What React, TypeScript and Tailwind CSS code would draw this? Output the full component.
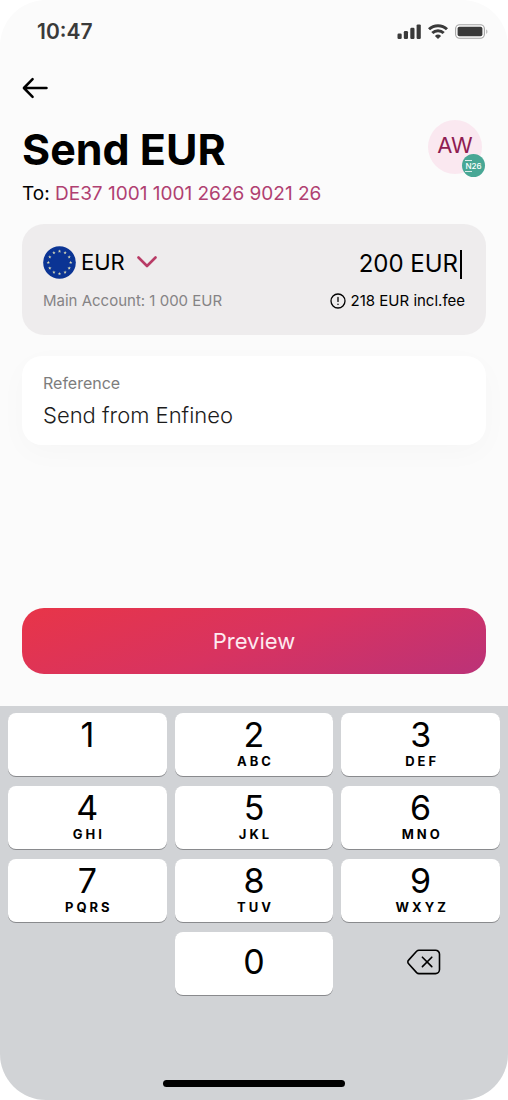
import { useState } from "react";

const keys = [
  { digit: "1", letters: "" },
  { digit: "2", letters: "ABC" },
  { digit: "3", letters: "DEF" },
  { digit: "4", letters: "GHI" },
  { digit: "5", letters: "JKL" },
  { digit: "6", letters: "MNO" },
  { digit: "7", letters: "PQRS" },
  { digit: "8", letters: "TUV" },
  { digit: "9", letters: "WXYZ" },
];

const keyClass =
  "flex h-[63px] flex-col items-center rounded-lg bg-white text-black shadow-[0_1px_0_#898a8d]";

function StatusBar() {
  return (
    <div className="flex h-16 items-center justify-between pl-[37px] pr-5 text-[#3a3a3a]">
      <span className="text-[21px] leading-6 font-semibold">10:47</span>
      <div className="flex items-center gap-[7px]">
        <svg className="h-4 w-6" viewBox="0 0 24 16" fill="currentColor" aria-hidden="true">
          <rect x="0.5" y="9.6" width="4.2" height="5.4" rx="1.2" />
          <rect x="6.8" y="7" width="4.2" height="8" rx="1.2" />
          <rect x="13.3" y="3.8" width="4.2" height="11.2" rx="1.2" />
          <rect x="19.6" y="0.4" width="4.2" height="14.6" rx="1.2" />
        </svg>
        <svg className="h-4 w-5" viewBox="0 0 20 16" aria-hidden="true">
          <g fill="none" stroke="currentColor" strokeWidth="3">
            <path d="M1 5.3a12.9 12.9 0 0 1 18 0" />
            <path d="M4.3 9a8.2 8.2 0 0 1 11.4 0" />
          </g>
          <path d="M10 15 6.9 11.9a4.5 4.5 0 0 1 6.2 0Z" fill="currentColor" />
        </svg>
        <svg className="h-4 w-[33px]" viewBox="0 0 33 16" aria-hidden="true">
          <rect x="0.6" y="0.7" width="28.8" height="13.6" rx="4" fill="none" stroke="#a5a5a5" strokeWidth="1.1" />
          <rect x="2.6" y="2.7" width="24.8" height="9.6" rx="1.8" fill="currentColor" />
          <path d="M31.2 5.4v4.4c1.6-.6 1.6-3.8 0-4.4Z" fill="#b5b5b5" />
        </svg>
      </div>
    </div>
  );
}

function Avatar() {
  return (
    <div className="relative flex size-[54px] items-center justify-center rounded-full bg-[#fae8f0] pb-1 text-[22px] text-[#8f1d52]">
      AW
      <span className="absolute top-[34px] left-[34px] flex size-[23px] items-center justify-center rounded-full bg-[#48a795] text-[8px] leading-[8px] font-medium text-white">
        <span className="border-y border-white/80 py-px">N</span>
        <span>26</span>
      </span>
    </div>
  );
}

function EuFlag() {
  const stars = Array.from({ length: 12 }, (_, i) => {
    const a = (i * Math.PI) / 6;
    return { x: 16.5 + 11.2 * Math.sin(a), y: 16.5 - 11.2 * Math.cos(a) };
  });
  return (
    <svg className="size-[33px] shrink-0" viewBox="0 0 33 33" aria-hidden="true">
      <circle cx="16.5" cy="16.5" r="16.3" fill="#0b3494" />
      {stars.map((s, i) => (
        <path
          key={i}
          transform={`translate(${s.x} ${s.y})`}
          d="M0-1.7.5-.5 1.7-.5.7.3 1 1.5 0 .8-1 1.5-.7.3-1.7-.5-.5-.5Z"
          fill="#d5d6b4"
        />
      ))}
    </svg>
  );
}

export default function App() {
  const [amount, setAmount] = useState("200");
  const [reference, setReference] = useState("Send from Enfineo");

  return (
    <div className="min-h-screen bg-white font-[Inter,sans-serif]">
      <div className="flex min-h-screen flex-col overflow-hidden rounded-[46px] bg-[#fbfbfb]">
        <StatusBar />
        <main className="flex flex-1 flex-col px-[22px] pb-8">
          <div className="flex h-12 items-center">
            <button type="button" aria-label="Back" className="text-black">
              <svg className="h-6 w-[26px]" viewBox="0 0 26 24" fill="none" stroke="currentColor" strokeWidth="2.5" strokeLinecap="round" strokeLinejoin="round">
                <path d="M24.5 12H2M10.6 3.2 1.9 12l8.7 8.8" />
              </svg>
            </button>
          </div>

          <div className="mt-2 flex items-start justify-between pr-1">
            <div>
              <h1 className="mt-[5px] text-[43px] leading-[48px] font-bold text-black">Send EUR</h1>
              <p className="mt-[9px] text-[19px] leading-6 text-black">
                To: <span className="text-[#b04071]">DE37 1001 1001 2626 9021 26</span>
              </p>
            </div>
            <Avatar />
          </div>

          <section className="mt-[18px] rounded-[22px] bg-[#eeeced] px-[21px] pt-5 pb-6">
            <div className="flex h-9 items-center justify-between">
              <label className="flex items-center gap-[5px]">
                <EuFlag />
                <select aria-label="Currency" className="appearance-none bg-transparent text-[22px] leading-8 text-black outline-none">
                  <option>EUR</option>
                </select>
                <svg className="ml-[7px] h-3 w-5" viewBox="0 0 20 12" fill="none" stroke="#b83b66" strokeWidth="2.6" strokeLinecap="round" strokeLinejoin="round" aria-hidden="true">
                  <path d="M1.5 1.5 10 10l8.5-8.5" />
                </svg>
              </label>
              <div className="flex min-w-0 flex-1 items-center justify-end pt-1">
                <input
                  aria-label="Amount"
                  value={`${amount} EUR`}
                  onChange={(e) => setAmount(e.target.value.replace(/\D/g, ""))}
                  className="w-full min-w-0 bg-transparent text-right text-2xl text-black outline-none"
                />
                <span className="mr-[3px] ml-0.5 h-[29px] w-0.5 bg-black" />
              </div>
            </div>
            <div className="mt-[11px] flex items-center justify-between text-[15px] leading-5">
              <span className="text-[#858385]">Main Account: 1 000 EUR</span>
              <span className="flex items-center gap-[5px] text-black">
                <svg className="size-4" viewBox="0 0 16 16" fill="none" stroke="currentColor" strokeWidth="1.3" strokeLinecap="round" aria-hidden="true">
                  <circle cx="8" cy="8" r="7" />
                  <path d="M8 4.4v4M8 11.2v.2" />
                </svg>
                218 EUR incl.fee
              </span>
            </div>
          </section>

          <div className="mt-[21px] flex flex-col rounded-[20px] bg-white px-[21px] pt-[15px] pb-[14px] shadow-[0_8px_30px_rgba(0,0,0,0.025)]">
            <label htmlFor="reference" className="text-base leading-6 text-[#7d7d7d]">
              Reference
            </label>
            <input
              id="reference"
              value={reference}
              onChange={(e) => setReference(e.target.value)}
              className="mt-1 h-8 w-full bg-transparent text-[22px] font-light text-[#1c1c1c] outline-none"
            />
          </div>

          <button
            type="button"
            className="mt-auto h-[66px] rounded-[22px] bg-[linear-gradient(160deg,#e83548_0%,#d83360_50%,#bb3278_100%)] text-[22px] text-[#fdeaf0]"
          >
            Preview
          </button>
        </main>

        <div className="flex flex-col bg-[#d1d3d6] px-2 pt-[7px] pb-[13px]">
          <div className="grid grid-cols-3 gap-x-2 gap-y-2.5">
            {keys.map((k) => (
              <button key={k.digit} type="button" onClick={() => setAmount(amount + k.digit)} className={`${keyClass} pt-1`}>
                <span className="text-[34px] leading-9">{k.digit}</span>
                <span className="pl-[3px] text-[13px] leading-4 font-bold tracking-[3px]">{k.letters}</span>
              </button>
            ))}
            <button type="button" onClick={() => setAmount(amount + "0")} className={`${keyClass} col-start-2 justify-center pb-1`}>
              <span className="text-[34px] leading-9">0</span>
            </button>
            <button type="button" aria-label="Delete" onClick={() => setAmount(amount.slice(0, -1))} className="flex h-[63px] items-center justify-center pb-1 text-black">
              <svg className="ml-1.5 h-[26px] w-[34px]" viewBox="0 0 34 26" fill="none" stroke="currentColor" strokeWidth="1.6" strokeLinecap="round" strokeLinejoin="round">
                <path d="M12 1.2h16.5a4 4 0 0 1 4 4v15.4a4 4 0 0 1-4 4H12a3.5 3.5 0 0 1-2.4-1L1.6 14.7a2.5 2.5 0 0 1 0-3.6l8-8.9A3.5 3.5 0 0 1 12 1.2Z" />
                <path d="m15.4 8.2 9.4 9.4M24.8 8.2l-9.4 9.4" />
              </svg>
            </button>
          </div>
          <div className="mt-[85px] h-[7px] w-[182px] self-center rounded-full bg-black" />
        </div>
      </div>
    </div>
  );
}
